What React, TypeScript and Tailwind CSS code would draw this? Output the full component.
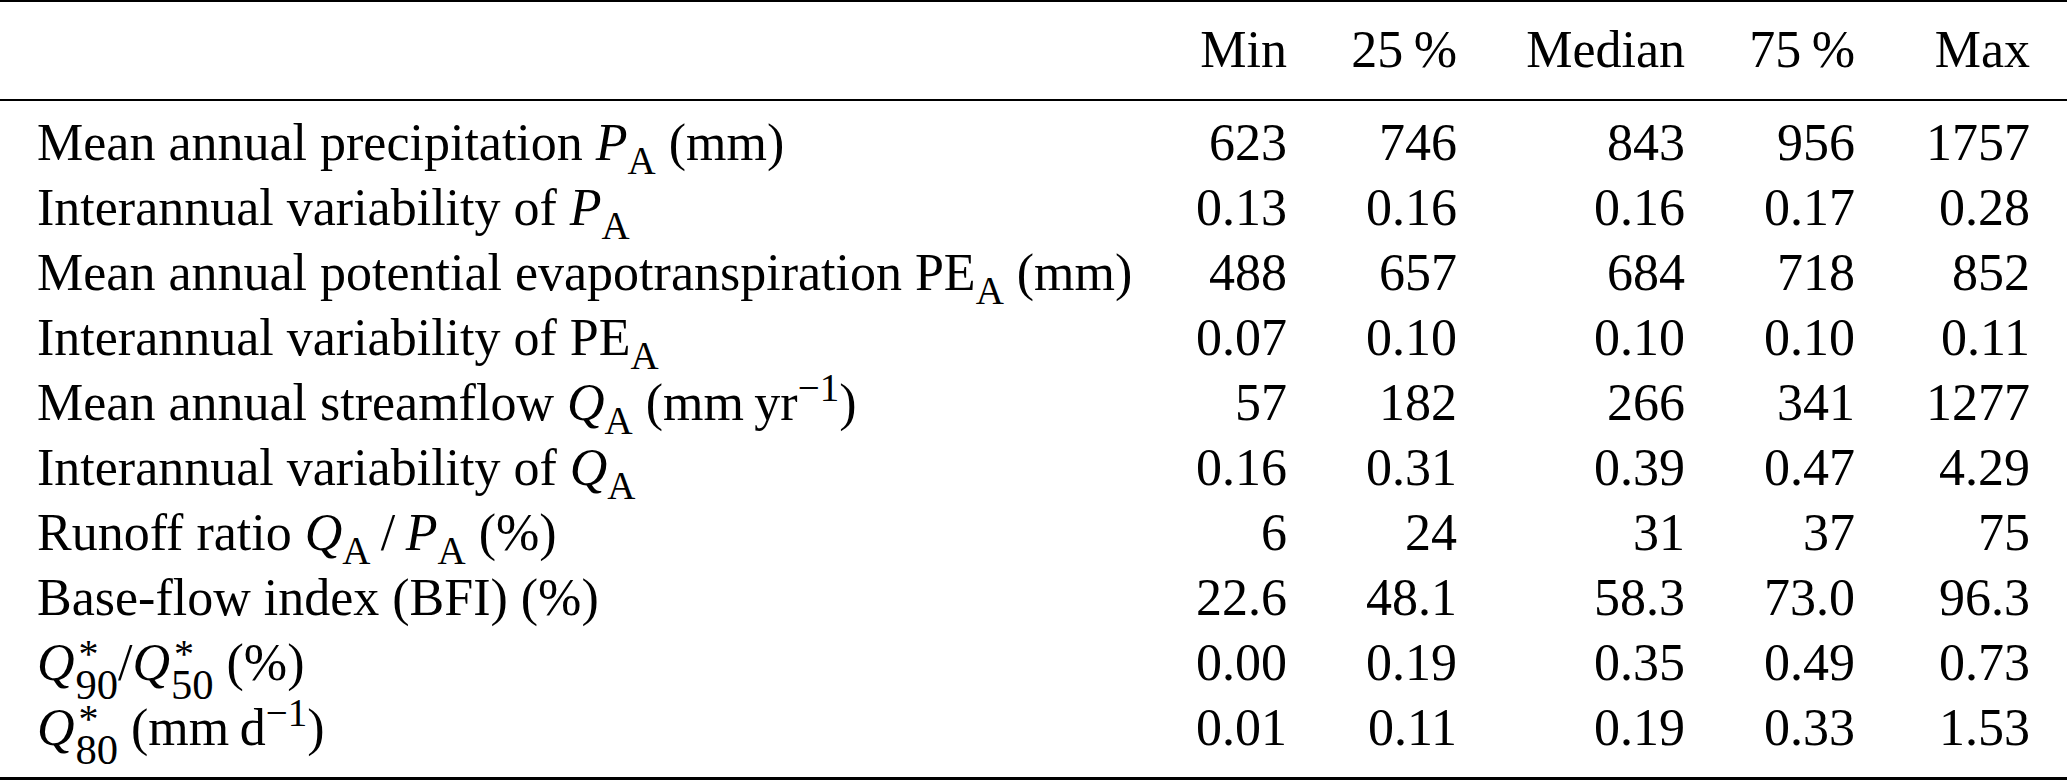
const cols = "grid grid-cols-[1050px_200px_170px_228px_170px_175px]";

const Sub = ({ children }: { children: React.ReactNode }) => (
  <sub className="not-italic -bottom-[0.35em]">{children}</sub>
);

const P = () => (
  <>
    <i>P</i>
    <Sub>A</Sub>
  </>
);

const Q = () => (
  <>
    <i>Q</i>
    <Sub>A</Sub>
  </>
);

// Q with a starred superscript stacked over a numeric subscript
const QStar = ({ sub }: { sub: string }) => (
  <>
    <i>Q</i>
    <span className="relative">
      <sub className="not-italic text-[0.82em] -bottom-[0.45em] ml-[0.02em]">{sub}</sub>
      <span className="absolute left-[0.1em] top-[0px] text-[0.77em] leading-none">*</span>
    </span>
  </>
);

const rows: { label: React.ReactNode; values: string[] }[] = [
  {
    label: (
      <>
        Mean annual precipitation <P /> (mm)
      </>
    ),
    values: ["623", "746", "843", "956", "1757"],
  },
  {
    label: (
      <>
        Interannual variability of <P />
      </>
    ),
    values: ["0.13", "0.16", "0.16", "0.17", "0.28"],
  },
  {
    label: (
      <>
        Mean annual potential evapotranspiration PE<Sub>A</Sub> (mm)
      </>
    ),
    values: ["488", "657", "684", "718", "852"],
  },
  {
    label: (
      <>
        Interannual variability of PE<Sub>A</Sub>
      </>
    ),
    values: ["0.07", "0.10", "0.10", "0.10", "0.11"],
  },
  {
    label: (
      <>
        Mean annual streamflow <Q /> (mm{"\u2009"}yr<sup>−1</sup>)
      </>
    ),
    values: ["57", "182", "266", "341", "1277"],
  },
  {
    label: (
      <>
        Interannual variability of <Q />
      </>
    ),
    values: ["0.16", "0.31", "0.39", "0.47", "4.29"],
  },
  {
    label: (
      <>
        Runoff ratio <Q />
        {"\u2009"}/{"\u2009"}
        <P /> (%)
      </>
    ),
    values: ["6", "24", "31", "37", "75"],
  },
  {
    label: <>Base-flow index (BFI) (%)</>,
    values: ["22.6", "48.1", "58.3", "73.0", "96.3"],
  },
  {
    label: (
      <>
        <QStar sub="90" />/<QStar sub="50" /> (%)
      </>
    ),
    values: ["0.00", "0.19", "0.35", "0.49", "0.73"],
  },
  {
    label: (
      <>
        <QStar sub="80" /> (mm{"\u2009"}d<sup>−1</sup>)
      </>
    ),
    values: ["0.01", "0.11", "0.19", "0.33", "1.53"],
  },
];

const headers = ["Min", "25\u2009%", "Median", "75\u2009%", "Max"];

export default function App() {
  return (
    <div className="w-[2067px] bg-white text-black font-['Liberation_Serif',serif] text-[52px] leading-[65px]">
      <div className="h-[2px] bg-black" />
      <div className={`${cols} pl-[37px] pt-[15px] pb-[17px]`}>
        <div />
        {headers.map((h) => (
          <div key={h} className="text-right whitespace-nowrap">
            {h}
          </div>
        ))}
      </div>
      <div className="h-[2px] bg-black" />
      <div className="pt-[9px] pb-[17px]">
        {rows.map((r, i) => (
          <div key={i} className={`${cols} pl-[37px] h-[65px]`}>
            <div className="whitespace-nowrap">{r.label}</div>
            {r.values.map((v, j) => (
              <div key={j} className="text-right">
                {v}
              </div>
            ))}
          </div>
        ))}
      </div>
      <div className="h-[3px] bg-black" />
    </div>
  );
}
